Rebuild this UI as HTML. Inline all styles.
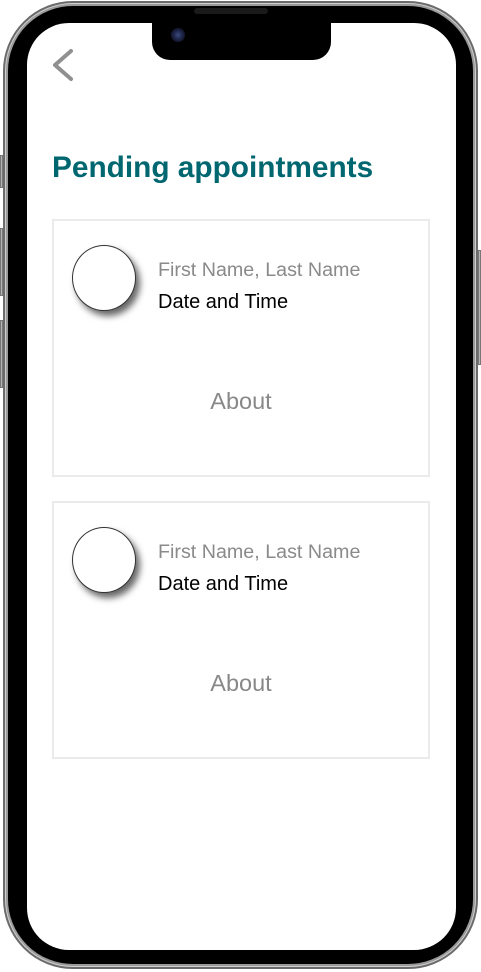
<!DOCTYPE html>
<html><head><style>
*{margin:0;padding:0;box-sizing:border-box}
body{width:481px;height:972px;background:#fff;position:relative;overflow:hidden;font-family:"Liberation Sans",Arial,sans-serif}
.frame{position:absolute;left:3px;top:1px;width:475px;height:968px;border-radius:70px;background:#cfcfcf;border:2px solid #6b6b6b}
.frame2{position:absolute;left:6px;top:4px;width:469px;height:962px;border-radius:67px;background:#000;border:2px solid #9a9a9a}
.screen{position:absolute;left:27px;top:23px;width:429px;height:927px;border-radius:42px;background:#fff;overflow:hidden}
.notch{position:absolute;left:152px;top:18px;width:179px;height:42px;background:#000;border-radius:0 0 18px 18px}
.cam{position:absolute;left:171px;top:28px;width:14px;height:14px;border-radius:50%;background:radial-gradient(circle,#3a4a80 0,#1a2040 50%,#0a0a14 100%)}
.spk{position:absolute;left:194px;top:8px;width:74px;height:6px;border-radius:3px;background:#1a1a1a}
.btn{position:absolute;background:#b5b5b5;width:3px;border:1px solid #777}
h1{position:absolute;left:52px;top:151px;font-size:29.8px;font-weight:bold;color:#00666f}
.card{position:absolute;left:52px;width:378px;height:258px;border:2px solid #ebebeb;background:#fff}
.av{position:absolute;left:18px;top:24px;width:64px;height:66px;border-radius:50%;border:1px solid #333;background:#fff;box-shadow:4px 5px 7px rgba(0,0,0,.6)}
.nm{position:absolute;left:104px;top:38px;font-size:19.7px;color:#8a8a8a}
.dt{position:absolute;left:104px;top:70px;font-size:20px;color:#000}
.ab{position:absolute;left:0;width:100%;top:167px;text-align:center;font-size:23.5px;color:#888}
</style></head><body>
<div class="btn" style="left:0;top:155px;height:33px"></div>
<div class="btn" style="left:0;top:228px;height:68px"></div>
<div class="btn" style="left:0;top:320px;height:68px"></div>
<div class="btn" style="left:478px;top:250px;height:115px"></div>
<div class="frame"></div>
<div class="frame2"></div>
<div class="screen"></div>
<div class="notch"></div>
<div class="cam"></div>
<div class="spk"></div>
<svg style="position:absolute;left:50px;top:48px" width="28" height="36"><path d="M21 3 L5 17 L21 31" fill="none" stroke="#909090" stroke-width="4" stroke-linecap="round" stroke-linejoin="round"/></svg>
<h1>Pending appointments</h1>
<div class="card" style="top:219px"><div class="av"></div><div class="nm">First Name, Last Name</div><div class="dt">Date and Time</div><div class="ab">About</div></div>
<div class="card" style="top:501px"><div class="av"></div><div class="nm">First Name, Last Name</div><div class="dt">Date and Time</div><div class="ab">About</div></div>
</body></html>
